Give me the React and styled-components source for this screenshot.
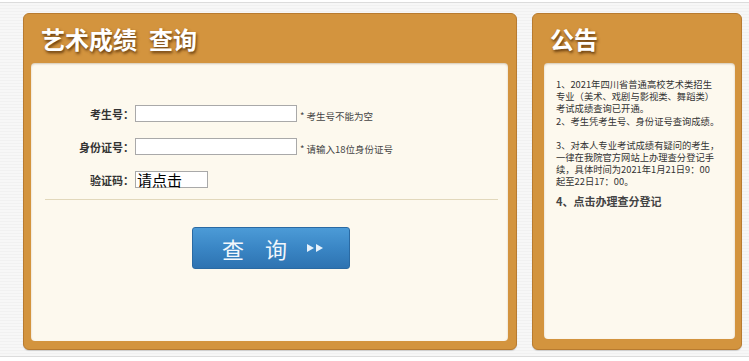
import React from 'react';
import styled, { createGlobalStyle } from 'styled-components';

const GlobalStyle = createGlobalStyle`
  html, body {
    margin: 0;
    padding: 0;
    background: #fff;
  }
  body {
    font-family: "Noto Sans CJK SC", "Noto Sans", sans-serif;
  }
`;

const App = () => {
  return (
    <>
      <GlobalStyle />
      <Page>
        <Frame>
          <Panel $width={494}>
            <PanelHead>艺术成绩<Gap />查询</PanelHead>
            <PanelBody $margin="0 8px 8px 7px">
              <Form>
                <Label>考生号：</Label>
                <Field>
                  <Input />
                  <Hint>* 考生号不能为空</Hint>
                </Field>
                <Label>身份证号：</Label>
                <Field>
                  <Input />
                  <Hint>* 请输入18位身份证号</Hint>
                </Field>
                <Label>验证码：</Label>
                <Field>
                  <Captcha>请点击</Captcha>
                </Field>
              </Form>
              <Divider />
              <ButtonRow>
                <QueryButton>
                  <span>查</span>
                  <span>询</span>
                  <svg width="17" height="10" viewBox="0 0 17 10">
                    <polygon points="0,1 7,5 0,9" fill="#e8f2fb" />
                    <polygon points="9,1 16,5 9,9" fill="#e8f2fb" />
                  </svg>
                </QueryButton>
              </ButtonRow>
            </PanelBody>
          </Panel>
          <Panel $width={210}>
            <PanelHead>公告</PanelHead>
            <PanelBody $margin="0 6px 10px 11px">
              <Notice>
                <p>
                  1、2021年四川省普通高校艺术类招生<br />
                  专业（美术、戏剧与影视类、舞蹈类）<br />
                  考试成绩查询已开通。<br />
                  2、考生凭考生号、身份证号查询成绩。
                </p>
                <p>
                  3、对本人专业考试成绩有疑问的考生，<br />
                  一律在我院官方网站上办理查分登记手<br />
                  续，具体时间为2021年1月21日9：00<br />
                  起至22日17：00。
                </p>
                <NoticeLink>4、点击办理查分登记</NoticeLink>
              </Notice>
            </PanelBody>
          </Panel>
        </Frame>
      </Page>
    </>
  );
};

const Page = styled.div`
  padding-top: 2px;
  height: 361px;
  box-sizing: border-box;
`;

const Frame = styled.div`
  display: flex;
  gap: 15px;
  padding: 10px 0 6px 23px;
  border-top: 1px solid #dcdcdc;
  border-bottom: 1px solid #dcdcdc;
  background: repeating-linear-gradient(180deg, #f7f7f7 0 2px, #f1f1f1 2px 3px);
`;

const Panel = styled.section`
  width: ${p => p.$width}px;
  height: 337px;
  box-sizing: border-box;
  display: flex;
  flex-direction: column;
  background: #d3943e;
  border: 1px solid #b87b30;
  border-radius: 6px;
  box-shadow: 0 1px 1px rgba(0, 0, 0, 0.15);
`;

const PanelHead = styled.h2`
  margin: 0;
  height: 49px;
  display: flex;
  align-items: center;
  padding-left: 17px;
  color: #fff;
  font-size: 24px;
  font-weight: 700;
  text-shadow: 1px 2px 3px rgba(70, 35, 0, 0.8);
`;

const Gap = styled.span`
  display: inline-block;
  width: 12px;
`;

const PanelBody = styled.div`
  flex: 1;
  margin: ${p => p.$margin};
  background: #fdf9ee;
  border-radius: 4px;
  box-shadow: inset 0 1px 2px rgba(90, 50, 0, 0.25);
`;

const Form = styled.div`
  display: grid;
  grid-template-columns: 104px auto;
  row-gap: 16px;
  align-items: center;
  padding-top: 42px;
`;

const Label = styled.label`
  text-align: right;
  font-size: 11px;
  font-weight: 700;
  color: #333;
  padding-right: 1px;
`;

const Field = styled.div`
  display: flex;
  align-items: center;
  gap: 3px;
  height: 17px;
`;

const Input = styled.input`
  width: 162px;
  height: 17px;
  box-sizing: border-box;
  margin: 0;
  border: 1px solid #a9a9a9;
  background: #fff;
`;

const Hint = styled.span`
  font-size: 9.5px;
  color: #444;
  padding-top: 4px;
`;

const Captcha = styled.div`
  width: 73px;
  height: 17px;
  box-sizing: border-box;
  border: 1px solid #a9a9a9;
  background: #fff;
  font-size: 15px;
  line-height: 15px;
  color: #000;
  padding-left: 1px;
`;

const Divider = styled.hr`
  margin: 11px 10px 0 14px;
  border: 0;
  border-top: 1px solid #e2d8bb;
`;

const ButtonRow = styled.div`
  display: flex;
  justify-content: center;
  padding-top: 27px;
`;

const QueryButton = styled.button`
  width: 158px;
  height: 42px;
  box-sizing: border-box;
  display: flex;
  align-items: center;
  gap: 21px;
  padding: 0 0 0 29px;
  border: 1px solid #2a6aa3;
  border-radius: 3px;
  background: linear-gradient(180deg, #4c9bd7 0%, #3a86c5 50%, #2e73b1 100%);
  color: #f2f7fc;
  font-family: "Noto Sans CJK SC", sans-serif;
  font-size: 22px;
  margin-left: 3px;
  svg {
    margin-left: -1px;
  }
`;

const Notice = styled.div`
  padding: 15px 0 0 12px;
  font-size: 9.3px;
  line-height: 12.2px;
  color: #333;
  white-space: nowrap;
  p {
    margin: 0 0 12px;
  }
`;

const NoticeLink = styled.div`
  margin-top: -5px;
  font-size: 11px;
  font-weight: 700;
  color: #444;
`;

export default App;
